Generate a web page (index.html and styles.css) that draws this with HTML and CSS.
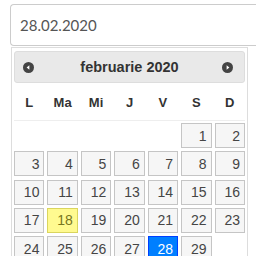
FILE: index.html
```html
<!DOCTYPE html>
<html lang="ro">
<head>
  <meta charset="UTF-8" />
  <title>Datepicker</title>
  <link rel="stylesheet" href="styles.css">
</head>
<body>

<div class="field">
  <input type="text" class="date-input" value="28.02.2020" />
</div>

<div class="datepicker">
  <div class="dp-header">
    <span class="dp-nav">
      <svg width="11" height="11" viewBox="0 0 11 11"><circle cx="5.5" cy="5.5" r="5.5" fill="#444"/><polygon points="3.6,5.5 6.4,3.2 6.4,7.8" fill="#fff"/></svg>
    </span>
    <span class="dp-title">februarie 2020</span>
    <span class="dp-nav">
      <svg width="11" height="11" viewBox="0 0 11 11"><circle cx="5.5" cy="5.5" r="5.5" fill="#444"/><polygon points="7.4,5.5 4.6,3.2 4.6,7.8" fill="#fff"/></svg>
    </span>
  </div>

  <div class="dp-days">
    <span>L</span><span>Ma</span><span>Mi</span><span>J</span><span>V</span><span>S</span><span>D</span>
  </div>

  <div class="dp-grid">
    <span class="empty"></span><span class="empty"></span><span class="empty"></span><span class="empty"></span><span class="empty"></span>
    <a class="day">1</a><a class="day">2</a>
    <a class="day">3</a><a class="day">4</a><a class="day">5</a><a class="day">6</a><a class="day">7</a><a class="day">8</a><a class="day">9</a>
    <a class="day">10</a><a class="day">11</a><a class="day">12</a><a class="day">13</a><a class="day">14</a><a class="day">15</a><a class="day">16</a>
    <a class="day">17</a><a class="day today">18</a><a class="day">19</a><a class="day">20</a><a class="day">21</a><a class="day">22</a><a class="day">23</a>
    <a class="day">24</a><a class="day">25</a><a class="day">26</a><a class="day">27</a><a class="day active">28</a><a class="day">29</a>
  </div>
</div>

</body>
</html>
```

FILE: styles.css
```css
* {
  box-sizing: border-box;
}
html, body {
  overflow: hidden;
}
body {
  margin: 0;
  padding: 4px 0 0 10px;
  background: #fff;
  font-family: "Liberation Sans", Arial, sans-serif;
  width: 256px;
  height: 256px;
}

/* input runs on past the frame, so no right edge */
.field {
  width: 246px;
}

.date-input {
  display: block;
  width: 100%;
  height: 42px;
  padding: 0 9px;
  border: 1px solid #ccc;
  border-right: none;
  border-radius: 4px 0 0 4px;
  font-family: Lato, "Open Sans", sans-serif;
  font-size: 15px;
  color: #555;
  background: #fff;
  outline: none;
}

.datepicker {
  width: 237px;
  margin: 1px 0 0 1px;
  padding: 3px 2px 0 2px;
  border: 1px solid #ddd;
  border-bottom: none;
  background: #fff;
}

.dp-header {
  display: flex;
  align-items: center;
  height: 32px;
  padding: 0 11px 0 8px;
  border: 1px solid #ddd;
  border-radius: 3px;
  background: #e9e9e9;
}

.dp-nav {
  display: flex;
  width: 11px;
  height: 11px;
}

.dp-title {
  flex: 1;
  text-align: center;
  font-weight: bold;
  font-size: 14.5px;
  color: #333;
  padding-left: 3px;
}

.dp-days {
  display: grid;
  grid-template-columns: repeat(7, 1fr);
  column-gap: 3px;
  height: 38px;
  align-items: center;
  border-bottom: 1px solid #eee;
}

.dp-days span {
  text-align: center;
  font-weight: bold;
  font-size: 13px;
  color: #333;
  padding-top: 1px;
}

.dp-grid {
  display: grid;
  grid-template-columns: repeat(7, 1fr);
  grid-auto-rows: 25px;
  column-gap: 3px;
  row-gap: 3.33px;
  padding-top: 2px;
}

.day {
  display: flex;
  align-items: center;
  justify-content: flex-end;
  padding-right: 4px;
  border: 1px solid #c5c5c5;
  background: #f6f6f6;
  color: #454545;
  font-size: 14px;
}

.day.today {
  border-color: #dad55e;
  background: #fffa90;
  color: #777620;
}

.day.active {
  border-color: #003eff;
  background: #007fff;
  color: #fff;
}
```
